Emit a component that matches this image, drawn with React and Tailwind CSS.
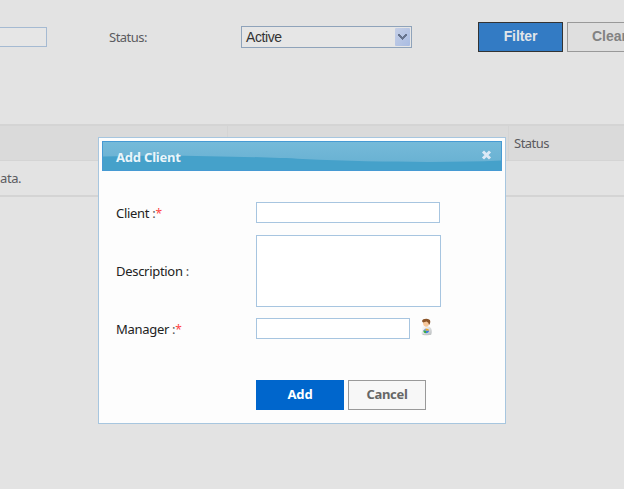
function FilterBar() {
  return (
    <div className="flex h-[124px] items-start pt-[22px] text-[13px] text-[#5b5b60]">
      <div className="mt-[5px] h-5 w-[47px] shrink-0 border border-l-0 border-[#a5bad2] bg-[#e6e6e6]" />
      <div className="ml-[62px] mt-[6px] w-[132px] shrink-0 leading-[18px] tracking-[-0.5px]">Status:</div>
      <div className="mt-1 flex h-[22px] w-[171px] shrink-0 items-center justify-between border border-[#8fa3ba] bg-[#e6e6e6] pl-1 pr-px text-[#333]">
        <span className="font-['Liberation_Sans',sans-serif] text-[14px] leading-5 tracking-[-0.4px]">Active</span>
        <span className="flex h-[18px] w-[15px] items-center justify-center rounded-[1px] bg-linear-to-br from-[#c5cfe6] to-[#a9bce2]">
          <svg width="9" height="6" viewBox="0 0 9 6" shapeRendering="crispEdges">
            <path d="M0 0h2v1h1v1h1v1h1V2h1V1h1V0h2v2H8v1H7v1H6v1H5v1H4V5H3V4H2V3H1V2H0z" fill="#67748d" />
          </svg>
        </span>
      </div>
      <button className="ml-[66px] h-[30px] w-[85px] shrink-0 border border-[#333] bg-[#337bc4] pb-px font-['Liberation_Sans',sans-serif] text-[14px] font-bold leading-[27px] tracking-[-0.1px] text-[#e2e5e9]">
        Filter
      </button>
      <button className="ml-1 h-[30px] w-[85px] shrink-0 border border-[#999] bg-[#dfdfdf] pb-px font-['Liberation_Sans',sans-serif] text-[14px] font-bold leading-[27px] text-[#828282]">
        Clear
      </button>
    </div>
  );
}

function ClientTable() {
  return (
    <div className="text-[13px] text-[#5b5b60]">
      <div className="flex h-[37px] border-b border-t-2 border-[#d4d4d4] bg-[#dadada]">
        <div className="w-[228px] shrink-0 border-r border-[#d4d4d4]" />
        <div className="w-[281px] shrink-0 border-r border-[#d4d4d4]" />
        <div className="pl-[5px] pt-2 leading-[18px] tracking-[-0.5px]">Status</div>
      </div>
      <div className="h-9 border-b-2 border-[#d4d4d4] pt-2 leading-[18px] tracking-[-0.4px]">ata.</div>
    </div>
  );
}

function ManagerIcon() {
  return (
    <svg width="14" height="18" viewBox="0 0 14 18">
      <defs>
        <linearGradient id="shirt" x1="0" x2="1" y1="0" y2="1">
          <stop offset="0.2" stopColor="#f4f5f5" />
          <stop offset="1" stopColor="#b9bdbf" />
        </linearGradient>
      </defs>
      <path d="M3 8.400C1.800 9.500 2.600 11 2.200 13c-.8 1.400-1 3 .1 3.600 2.300.7 7 .7 9-.2.900-2.300.8-5.700-1.400-7.300L7 7.800z" fill="url(#shirt)" />
      <path d="M2.600 16.400c2.300.6 6 .5 8.400-.2" stroke="#c0c4c5" fill="none" />
      <path d="M3 4.300c0 2.300.5 4 2.700 4.400C8 8.800 9.200 7.500 9.200 4.500L7 2.500H3.500z" fill="#f6c79b" />
      <path d="M2 3.200C2.300 1.500 4 .8 6.200.8c2.300 0 4.200.8 4.100 2.800 0 1.300-.5 2.600-1.200 3.400L8.300 4.700 6.600 3.600 3 4.400z" fill="#8b5428" />
      <path d="M3.300 12.500 5.700 10.500v2.200H3z" fill="#4a80d8" />
      <path d="M5.700 10.500c1.900 0 3.300.8 3.500 2.200H5.700z" fill="#f0a52a" />
      <path d="M3.300 12.700h2.700v2.500c-1.600 0-2.500-.8-2.700-2.500z" fill="#38ad45" />
      <path d="M6 12.700h3.100c-.2 1.600-1.400 2.500-3.100 2.500z" fill="#397ee0" />
    </svg>
  );
}

function Label({ text, required }) {
  return (
    <div className="w-[140px] shrink-0 leading-[18px] tracking-[-0.3px] text-[#222]">
      {text} <span className="text-[#555]">:</span>
      {required && <span className="text-[12px] leading-none text-[#f44]">*</span>}
    </div>
  );
}

function AddClientDialog() {
  return (
    <div className="absolute left-[98px] top-[137px] h-[287px] w-[408px] border border-[#a7c6df] bg-[#fdfdfd] p-[3px] text-[13px]">
      <div className="relative flex h-[30px] items-center justify-between border border-[#469ad3] bg-[#45a1ca] pl-[13px] pr-[9px]">
        <svg className="absolute inset-0" width="398" height="28" viewBox="0 0 398 28" preserveAspectRatio="none">
          <defs>
            <linearGradient id="gloss" x1="0" x2="0" y1="0" y2="1">
              <stop offset="0" stopColor="#75bad9" />
              <stop offset="1" stopColor="#6ab2d3" />
            </linearGradient>
          </defs>
          <path d="M0 0H398V18.5C340 21 270 20 200 17C150 14.500 60 12.500 0 14.500Z" fill="url(#gloss)" />
        </svg>
        <span className="relative mt-[2px] font-bold leading-[18px] tracking-[-0.2px] text-[#eaf5fa]">Add Client</span>
        <svg className="relative -mt-[2px]" width="11" height="10" viewBox="0 0 11 10">
          <path d="M2 1.500 9 8.500M9 1.500 2 8.500" stroke="#dce9f6" strokeWidth="3" />
        </svg>
      </div>
      <div className="flex flex-col pl-[14px] pt-[31px]">
        <div className="flex h-[21px] items-center">
          <Label text="Client" required />
          <div className="h-[21px] w-[184px] border border-[#a7c5e0] bg-white" />
        </div>
        <div className="mt-3 flex h-[72px] items-center">
          <Label text="Description" />
          <div className="h-[72px] w-[185px] border border-[#a7c5e0] bg-white" />
        </div>
        <div className="mt-[11px] flex h-[21px] items-center">
          <Label text="Manager" required />
          <div className="h-[21px] w-[154px] border border-[#a7c5e0] bg-white" />
          <div className="-mt-[3px] ml-[10px]"><ManagerIcon /></div>
        </div>
        <div className="ml-[140px] mt-[41px] flex gap-1">
          <button className="h-[30px] w-[88px] bg-[#06c] pb-[2px] text-[13px] font-bold leading-[28px] tracking-[-0.2px] text-white">Add</button>
          <button className="h-[30px] w-[78px] border border-[#999] bg-[#f7f7f7] pb-[2px] text-[13px] font-bold leading-[26px] tracking-[-0.3px] text-[#666]">
            Cancel
          </button>
        </div>
      </div>
    </div>
  );
}

export default function App() {
  return (
    <div className="relative h-[489px] w-[624px] overflow-hidden bg-[#e3e3e3] font-['Noto_Sans','Open_Sans',sans-serif]">
      <FilterBar />
      <ClientTable />
      <AddClientDialog />
    </div>
  );
}
